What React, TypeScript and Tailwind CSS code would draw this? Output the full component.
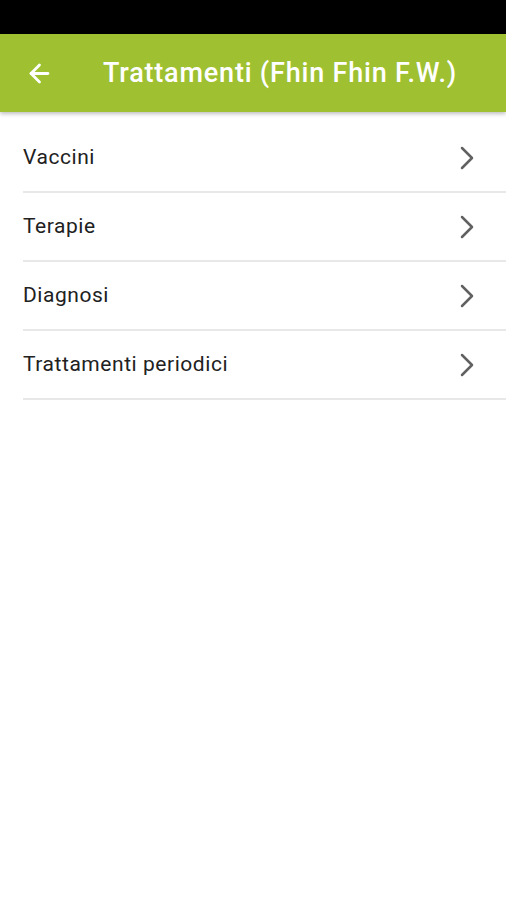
import { ArrowLeft, ChevronRight } from "lucide-react";

const items = ["Vaccini", "Terapie", "Diagnosi", "Trattamenti periodici"];

function App()
{
	return (
		<div className="w-[506px] h-[900px] bg-white font-['Roboto',sans-serif] overflow-hidden">
			<div className="h-[34px] bg-black" />
			<div className="h-[78px] bg-[#9fc131] flex items-center shadow-[0_2px_4px_rgba(0,0,0,0.25)] relative">
				<ArrowLeft className="ml-[25px] text-white" size={29} strokeWidth={2.3} />
				<h1 className="ml-[49px] text-white text-[27px] font-medium tracking-[0.8px]">
					Trattamenti (Fhin Fhin F.W.)
				</h1>
			</div>
			<div className="pt-[12px] pl-[23px]">
				{items.map((item) => (
					<div key={item} className="h-[69px] flex items-center justify-between border-b-2 border-[#e8e8e8] pr-[19px]">
						<span className="text-[21px] text-[#212121] tracking-[0.55px]">{item}</span>
						<ChevronRight className="text-[#616161]" size={40} strokeWidth={1.5} />
					</div>
				))}
			</div>
		</div>
	);
}

export default App;
